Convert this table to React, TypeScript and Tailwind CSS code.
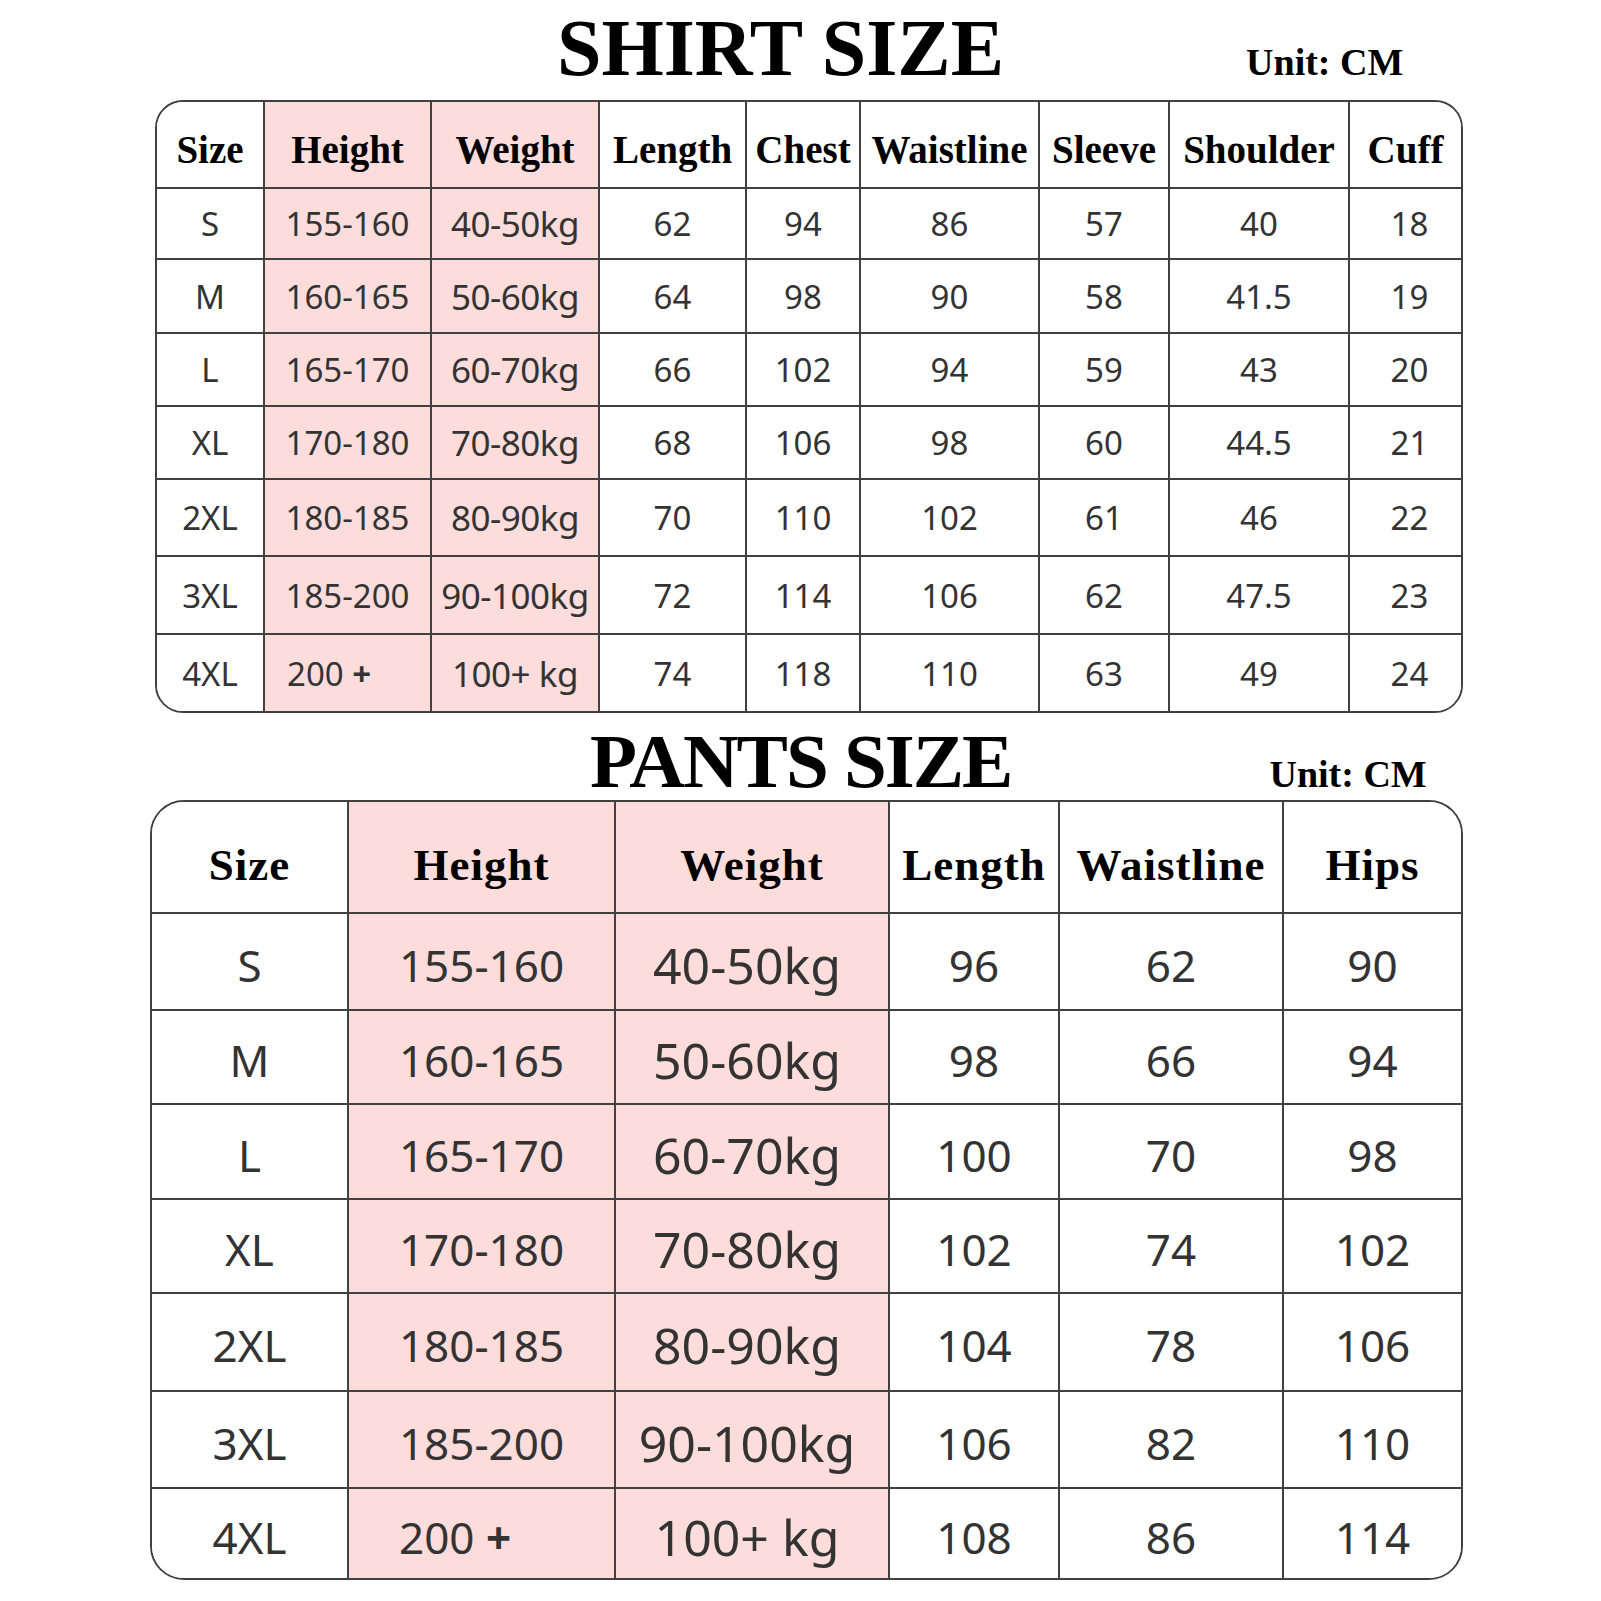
const shirtHead = ["Size", "Height", "Weight", "Length", "Chest", "Waistline", "Sleeve", "Shoulder", "Cuff"];
const shirtRows = [
  ["S", "155-160", "40-50kg", "62", "94", "86", "57", "40", "18"],
  ["M", "160-165", "50-60kg", "64", "98", "90", "58", "41.5", "19"],
  ["L", "165-170", "60-70kg", "66", "102", "94", "59", "43", "20"],
  ["XL", "170-180", "70-80kg", "68", "106", "98", "60", "44.5", "21"],
  ["2XL", "180-185", "80-90kg", "70", "110", "102", "61", "46", "22"],
  ["3XL", "185-200", "90-100kg", "72", "114", "106", "62", "47.5", "23"],
  ["4XL", "200 +", "100+ kg", "74", "118", "110", "63", "49", "24"],
];

const pantsHead = ["Size", "Height", "Weight", "Length", "Waistline", "Hips"];
const pantsRows = [
  ["S", "155-160", "40-50kg", "96", "62", "90"],
  ["M", "160-165", "50-60kg", "98", "66", "94"],
  ["L", "165-170", "60-70kg", "100", "70", "98"],
  ["XL", "170-180", "70-80kg", "102", "74", "102"],
  ["2XL", "180-185", "80-90kg", "104", "78", "106"],
  ["3XL", "185-200", "90-100kg", "106", "82", "110"],
  ["4XL", "200 +", "100+ kg", "108", "86", "114"],
];

const serif = "font-['Liberation_Serif','Times_New_Roman',serif] font-bold text-black";
const sans = "font-['Noto_Sans','Open_Sans',sans-serif] text-[#333]";

function Value({ text }: { text: string }) {
  // the plus sign in "200 +" is heavier in the chart
  if (text === "200 +") {
    return (
      <span className="whitespace-pre">
        {"200 "}
        <span className="font-bold">+</span>
      </span>
    );
  }
  return <span>{text}</span>;
}

function Cell({
  children,
  pink,
  lastCol,
  lastRow,
  className,
}: {
  children: React.ReactNode;
  pink: boolean;
  lastCol: boolean;
  lastRow: boolean;
  className: string;
}) {
  return (
    <div
      className={`flex items-center whitespace-nowrap border-[#404040] ${lastCol ? "" : "border-r-2"} ${
        lastRow ? "" : "border-b-2"
      } ${pink ? "bg-[#fddcdc]" : "bg-white"} ${className}`}
    >
      {children}
    </div>
  );
}

function ShirtTable() {
  return (
    <div className="ml-[155px] w-[1308px] overflow-hidden rounded-[28px] border-2 border-[#404040]">
      <div className="grid grid-cols-[108px_167px_168px_147px_114px_179px_130px_180px_111px] grid-rows-[87px_71px_74px_73px_73px_77px_78px_76px]">
        {shirtHead.map((h, i) => (
          <Cell
            key={h}
            pink={i === 1 || i === 2}
            lastCol={i === 8}
            lastRow={false}
            className={`${serif} justify-center pt-[10px] text-[39px] leading-none`}
          >
            {h}
          </Cell>
        ))}
        {shirtRows.map((row, r) =>
          row.map((v, i) => (
            <Cell
              key={`${r}-${i}`}
              pink={i === 1 || i === 2}
              lastCol={i === 8}
              lastRow={r === shirtRows.length - 1}
              className={`${sans} leading-none ${v === "200 +" ? "justify-start pl-[22px]" : "justify-center"} ${
                i === 2 ? "text-[35px] tracking-[-0.5px]" : "text-[33px]"
              } ${i === 8 ? "pl-[8px]" : ""}`}
            >
              <Value text={v} />
            </Cell>
          ))
        )}
      </div>
    </div>
  );
}

function PantsTable() {
  return (
    <div className="ml-[150px] w-[1313px] overflow-hidden rounded-[34px] border-2 border-[#404040]">
      <div className="grid grid-cols-[197px_267px_274px_170px_224px_177px] grid-rows-[112px_97px_94px_95px_94px_98px_97px_89px]">
        {pantsHead.map((h, i) => (
          <Cell
            key={h}
            pink={i === 1 || i === 2}
            lastCol={i === 5}
            lastRow={false}
            className={`${serif} justify-center pt-[16px] text-[45px] leading-none tracking-[1px]`}
          >
            {h}
          </Cell>
        ))}
        {pantsRows.map((row, r) =>
          row.map((v, i) => (
            <Cell
              key={`${r}-${i}`}
              pink={i === 1 || i === 2}
              lastCol={i === 5}
              lastRow={r === pantsRows.length - 1}
              className={`${sans} pt-[6px] leading-none ${v === "200 +" ? "justify-start pl-[50px]" : "justify-center"} ${
                i === 2 ? "pr-[10px] text-[50px]" : "text-[44px]"
              }`}
            >
              <Value text={v} />
            </Cell>
          ))
        )}
      </div>
    </div>
  );
}

export default function App() {
  return (
    <main className="h-[1601px] w-[1601px] overflow-hidden bg-white">
      <div className="flex h-[100px] items-baseline pt-[8px]">
        <h1 className={`${serif} ml-[557px] text-[80px] leading-none`}>SHIRT SIZE</h1>
        <span className={`${serif} ml-[242px] text-[38px] leading-none`}>Unit: CM</span>
      </div>
      <ShirtTable />
      <div className="flex h-[87px] items-baseline pt-[10px]">
        <h1 className={`${serif} ml-[590px] text-[77px] leading-none tracking-[-2px]`}>PANTS SIZE</h1>
        <span className={`${serif} ml-[258px] text-[38px] leading-none`}>Unit: CM</span>
      </div>
      <PantsTable />
    </main>
  );
}
